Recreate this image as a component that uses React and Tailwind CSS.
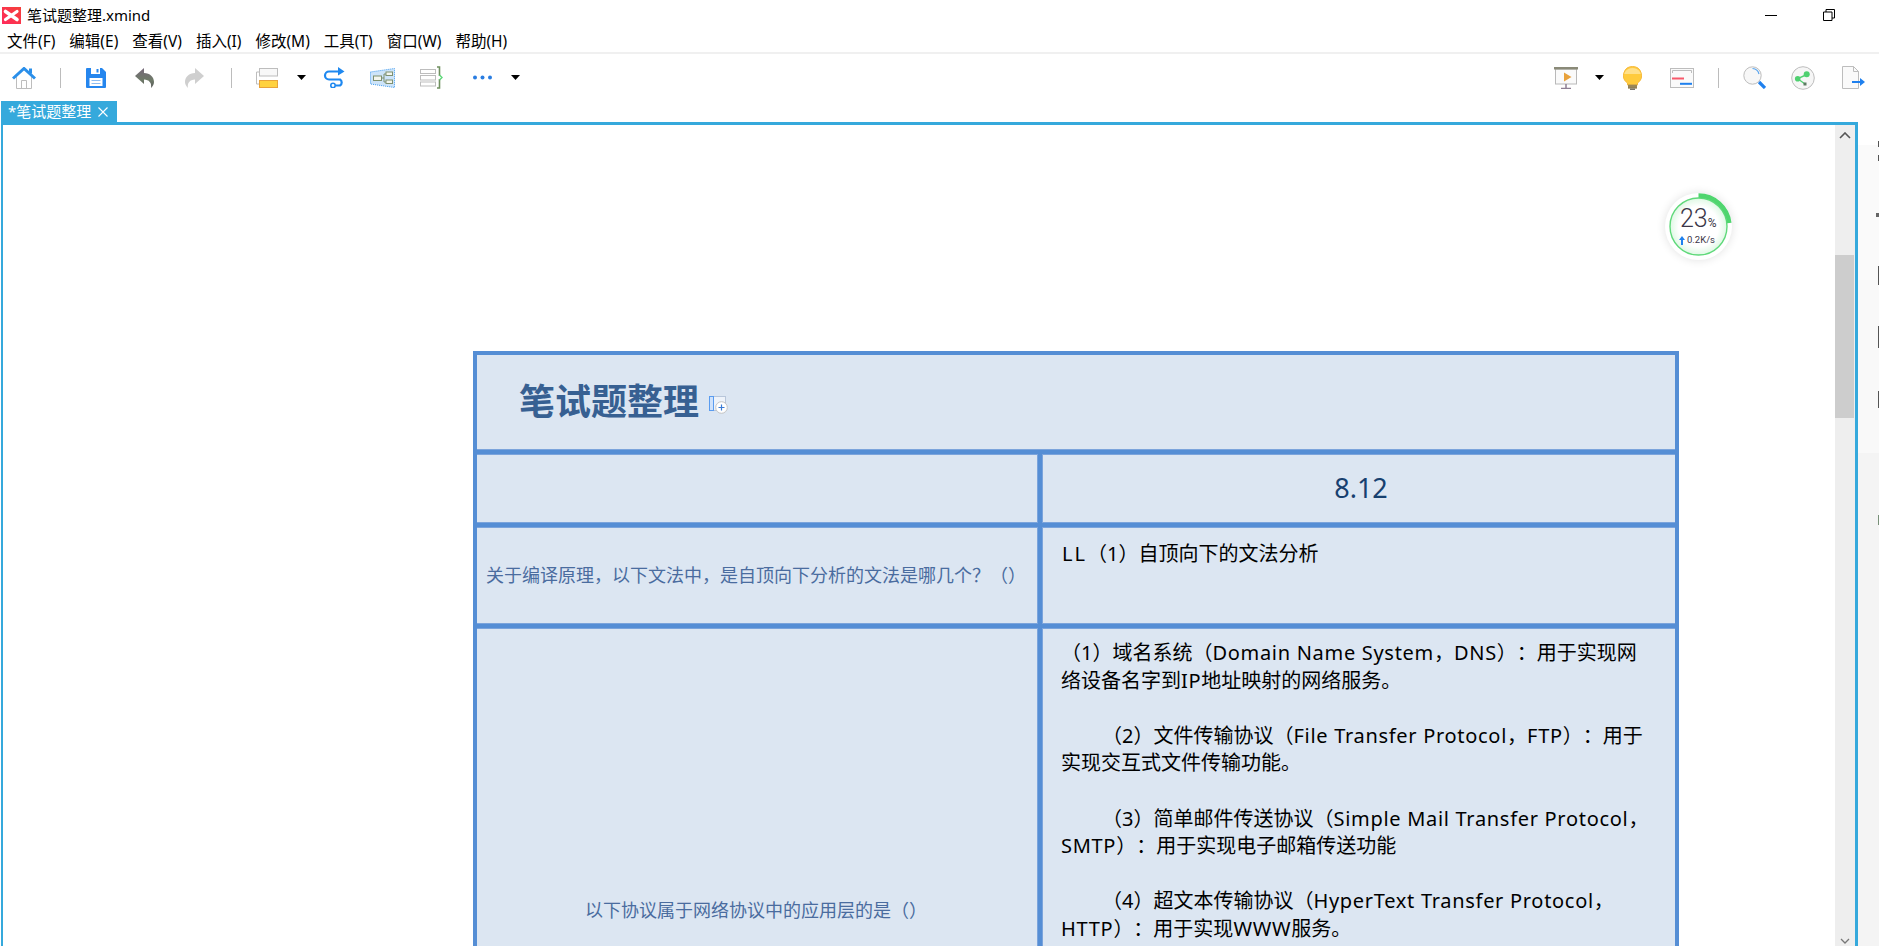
import React from "react";

const Caret = ({ className }) => (
  <svg width="9" height="5" viewBox="0 0 9 5" className={className}>
    <path d="M0 0H9L4.5 5Z" fill="#000" />
  </svg>
);

const Logo = () => (
  <svg width="19" height="17" viewBox="0 0 19 17">
    <defs>
      <linearGradient id="logoBg" x1="0" y1="1" x2="1" y2="0">
        <stop offset="0" stopColor="#ff2a5c" />
        <stop offset="1" stopColor="#f5403a" />
      </linearGradient>
    </defs>
    <rect width="19" height="17" fill="url(#logoBg)" />
    <path d="M3.5 4.5L15 12.5" stroke="#fff" strokeWidth="3.6" strokeLinecap="round" />
    <path d="M3.5 12.5L15 4.5" stroke="#fff" strokeWidth="3.2" strokeLinecap="round" />
  </svg>
);

const Home = ({ className }) => (
  <svg width="24" height="22" viewBox="0 0 24 22" className={className}>
    <path d="M4.5 10V21.5H19.5V10" fill="#fff" stroke="#bdbdbd" />
    <path d="M9.5 21.5V13.5H14.5V21.5" fill="none" stroke="#bdbdbd" />
    <path d="M1 11.5L12 1.5L23 11.5" fill="none" stroke="#2a8fea" strokeWidth="3" />
    <rect x="17" y="1.5" width="3" height="5" fill="#2a8fea" />
  </svg>
);

const Save = ({ className }) => (
  <svg width="20" height="20" viewBox="0 0 20 20" className={className}>
    <path d="M1 0H16L20 4V19A1 1 0 0 1 19 20H1A1 1 0 0 1 0 19V1A1 1 0 0 1 1 0Z" fill="#2586ee" />
    <rect x="5" y="0" width="9" height="6" fill="#fff" />
    <rect x="10.5" y="1" width="2" height="3.5" fill="#2586ee" />
    <rect x="3.5" y="10" width="13" height="8" fill="#fff" />
    <path d="M5.5 12.5H14.5M5.5 15.5H14.5" stroke="#8dbdf2" />
  </svg>
);

const Undo = ({ className, redo }) => (
  <svg width="19" height="20" viewBox="0 0 19 20" className={className}>
    <defs>
      <linearGradient id="undoFill" x1="0" y1="0" x2="0" y2="1">
        <stop offset="0" stopColor="#76687a" />
        <stop offset="0.6" stopColor="#6e7a68" />
        <stop offset="1" stopColor="#5a5a5a" />
      </linearGradient>
    </defs>
    <path
      d="M0 8L9 0V5C15 5 19 9 19 14C19 16 18 18 16 20C17 15 14 11.5 9 11.5V16Z"
      fill={redo ? "#cfcfcf" : "url(#undoFill)"}
      transform={redo ? "matrix(-1 0 0 1 19 0)" : undefined}
    />
  </svg>
);

const Topic = ({ className }) => (
  <svg width="22" height="20" viewBox="0 0 22 20" className={className}>
    <path d="M3.5 4H0.5V16H3.5" fill="none" stroke="#bdbdbd" />
    <rect x="3.5" y="0.5" width="18" height="7.5" fill="#f8f8f8" stroke="#bdbdbd" />
    <rect x="3.5" y="12.5" width="18" height="7" fill="#ffd23f" stroke="#e8a33a" />
  </svg>
);

const Relation = ({ className }) => (
  <svg width="22" height="21" viewBox="0 0 22 21" className={className}>
    <path d="M15 4.5H6A4 4 0 0 0 6 12.5H17A3.5 3.5 0 0 1 17 18.5H12.5" fill="none" stroke="#1e88f0" strokeWidth="2.2" />
    <path d="M15 0L21.5 4.5L15 8.5Z" fill="#1e88f0" />
    <circle cx="10" cy="18.5" r="2.2" fill="#fff" stroke="#1e88f0" strokeWidth="1.6" />
  </svg>
);

const Boundary = ({ className }) => (
  <svg width="25" height="20" viewBox="0 0 25 20" className={className}>
    <path d="M0.5 4L24.5 0.5V19.5L0.5 16Z" fill="#cde4f9" stroke="#3f9bf0" strokeDasharray="1 1" />
    <rect x="3.5" y="8" width="8" height="4.5" fill="#f3f6ee" stroke="#7f906f" />
    <rect x="16" y="4" width="6.5" height="3.5" fill="#f3f6ee" stroke="#7f906f" />
    <rect x="16" y="12" width="6.5" height="3.5" fill="#f3f6ee" stroke="#7f906f" />
    <path d="M11.5 10H14M14 6V14M14 6H16M14 14H16" fill="none" stroke="#7f906f" />
  </svg>
);

const Summary = ({ className }) => (
  <svg width="23" height="23" viewBox="0 0 23 23" className={className}>
    <rect x="0.5" y="3.5" width="15" height="4" fill="#fff" stroke="#bdbdbd" />
    <rect x="0.5" y="9.5" width="15" height="4.5" fill="#fff" stroke="#bdbdbd" />
    <rect x="0.5" y="16" width="15" height="4" fill="#fff" stroke="#bdbdbd" />
    <path d="M17 1H19.5V10M19.5 13V22H17" fill="none" stroke="#6f8f5f" strokeWidth="1.6" />
    <path d="M19.5 9L22 11.5L19.5 14" fill="none" stroke="#5fd97a" strokeWidth="1.4" />
  </svg>
);

const Dots = ({ className }) => (
  <svg width="19" height="5" viewBox="0 0 19 5" className={className}>
    <circle cx="2" cy="2.5" r="2" fill="#2a7de1" />
    <circle cx="9.5" cy="2.5" r="2" fill="#2a7de1" />
    <circle cx="17" cy="2.5" r="2" fill="#2a7de1" />
  </svg>
);

const Present = ({ className }) => (
  <svg width="24" height="22" viewBox="0 0 24 22" className={className}>
    <rect x="1.5" y="2" width="21" height="15" fill="#fafafa" stroke="#b9b9b9" />
    <rect x="0" y="0" width="24" height="2.5" fill="#8a8a78" />
    <path d="M10 5.5L17.5 10L10 14.5Z" fill="#e8a13a" />
    <path d="M12 17V21M7 21.5H17" stroke="#8e7f94" strokeWidth="1.5" />
  </svg>
);

const Bulb = ({ className }) => (
  <svg width="19" height="24" viewBox="0 0 19 24" className={className}>
    <path d="M9.5 0.5A9 9 0 0 1 14.5 17V19H4.5V17A9 9 0 0 1 9.5 0.5Z" fill="#ffcb3d" stroke="#f6b93b" />
    <path d="M2 6A9 9 0 0 1 17 6L17.8 8H1.2Z" fill="#ffe08a" />
    <rect x="5" y="18.5" width="9" height="4" fill="#b59a55" />
    <path d="M5 20H14M5 21.8H14" stroke="#7f7358" />
    <rect x="7" y="22.5" width="5" height="1.5" fill="#77746b" />
  </svg>
);

const Gantt = ({ className }) => (
  <svg width="24" height="20" viewBox="0 0 24 20" className={className}>
    <rect x="0.5" y="0.5" width="23" height="19" fill="#fafafa" stroke="#bdbdbd" />
    <path d="M2.5 5V2.5H21.5V5" fill="none" stroke="#bdbdbd" />
    <rect x="2" y="9.5" width="12" height="2" fill="#f7596b" />
    <rect x="10" y="14.8" width="12" height="2" fill="#1f80ee" />
  </svg>
);

const Search = ({ className }) => (
  <svg width="23" height="23" viewBox="0 0 23 23" className={className}>
    <circle cx="9.5" cy="9.5" r="8.7" fill="#f7f7f7" stroke="#bdbdbd" />
    <path d="M9.5 2.5A7 7 0 0 1 16 8" fill="none" stroke="#5aa5ef" strokeWidth="1.2" />
    <path d="M16 16L22 22" stroke="#1f80ee" strokeWidth="3.2" />
  </svg>
);

const Share = ({ className }) => (
  <svg width="24" height="24" viewBox="0 0 24 24" className={className}>
    <circle cx="12" cy="12" r="11.3" fill="#f6f6f6" stroke="#bdbdbd" />
    <path d="M16 8.5L6.7 12.7L14 18" fill="none" stroke="#4fd070" strokeWidth="1.4" />
    <circle cx="15.7" cy="8.3" r="3" fill="#4fd070" />
    <circle cx="6.7" cy="12.7" r="2.8" fill="#4fd070" />
    <rect x="12.5" y="16.5" width="3" height="3" fill="#5c7a62" />
  </svg>
);

const Exportfile = ({ className }) => (
  <svg width="23" height="23" viewBox="0 0 23 23" className={className}>
    <path d="M0.5 0.5H11.5L16.5 5.5V22.5H0.5Z" fill="#fafafa" stroke="#bdbdbd" />
    <path d="M11.5 0.5V5.5H16.5" fill="none" stroke="#bdbdbd" />
    <rect x="10" y="15" width="10" height="2" fill="#1f80ee" />
    <path d="M18 12L23 16L18 20Z" fill="#1f80ee" />
  </svg>
);

const Sep = ({ className }) => <div className={`w-px h-[20px] bg-[#bcbcbc] ${className}`} />;

const menus = [
  ["文件(F)", "ml-[7px]"],
  ["编辑(E)", "ml-[14px]"],
  ["查看(V)", "ml-[14px]"],
  ["插入(I)", "ml-[14px]"],
  ["修改(M)", "ml-[14px]"],
  ["工具(T)", "ml-[14px]"],
  ["窗口(W)", "ml-[14px]"],
  ["帮助(H)", "ml-[14px]"],
];

const Gauge = () => (
  <div className="absolute left-[1665px] top-[193px] w-[67px] h-[67px] rounded-full bg-white shadow-[0_0_10px_rgba(0,0,0,0.12)]">
    <svg width="67" height="67" viewBox="0 0 67 67" className="absolute left-0 top-0">
      <defs>
        <radialGradient id="gaugeFill">
          <stop offset="0.7" stopColor="#ffffff" />
          <stop offset="1" stopColor="#dff8e4" />
        </radialGradient>
      </defs>
      <circle cx="33.5" cy="33.5" r="28.5" fill="url(#gaugeFill)" stroke="#5fd97a" strokeWidth="1.4" />
      <path d="M33.5 2.5A31 31 0 0 1 64.3 30" fill="none" stroke="#4fd56e" strokeWidth="4.5" />
    </svg>
    <div className="absolute left-[15px] top-[12px] flex items-baseline text-[#3b3648] font-['Roboto',sans-serif] font-light">
      <span className="text-[25px] leading-[28px]">23</span>
      <span className="text-[12px] leading-[12px] font-normal">%</span>
    </div>
    <div className="absolute left-[14px] top-[41px] flex items-center gap-[2px] text-[9.5px] leading-[12px] text-[#3b3648] font-['Roboto',sans-serif]">
      <svg width="6" height="9" viewBox="0 0 6 9">
        <path d="M3 0L6 4H4V9H2V4H0Z" fill="#1f80ee" />
      </svg>
      <span>0.2K/s</span>
    </div>
  </div>
);

const Line = ({ indent, children }) => (
  <div className={`h-[27.6px] whitespace-nowrap ${indent ? "pl-[41px]" : ""}`}>{children}</div>
);

// latin runs are a little wider in the original font
const L = ({ children }) => <span className="tracking-[0.7px]">{children}</span>;

export default function App() {
  return (
    <div className="relative w-[1879px] h-[946px] overflow-hidden bg-white flex flex-col [text-spacing-trim:space-all] font-['Noto_Sans','Noto_Sans_CJK_SC',sans-serif]">
      {/* title bar */}
      <div className="h-[30px] flex items-center shrink-0">
        <div className="ml-[2px] mt-[1px]">
          <Logo />
        </div>
        <span className="ml-[6px] text-[15px] text-black">笔试题整理.xmind</span>
        <div className="ml-auto w-[12px] h-px bg-black mr-[46px]" />
        <svg width="12" height="12" viewBox="0 0 12 12" className="mr-[44px]">
          <path d="M0.5 3H9V11.5H0.5Z M3 3V0.5H11.5V9H9" fill="none" stroke="#000" />
        </svg>
      </div>

      {/* menu */}
      <div className="h-[22px] pt-[2px] flex items-center shrink-0 text-[15.5px] text-black">
        {menus.map(([label, cls]) => (
          <span key={label} className={cls}>
            {label}
          </span>
        ))}
      </div>
      <div className="h-[2px] bg-[#f0f0f0] shrink-0" />

      {/* toolbar */}
      <div className="h-[47px] flex items-center shrink-0">
        <Home className="ml-[12px]" />
        <Sep className="ml-[24px]" />
        <Save className="ml-[25px]" />
        <Undo className="ml-[29px]" />
        <Undo redo className="ml-[31px]" />
        <Sep className="ml-[27px]" />
        <Topic className="ml-[24px]" />
        <Caret className="ml-[19px]" />
        <Relation className="ml-[17px]" />
        <Boundary className="ml-[25px]" />
        <Summary className="ml-[25px]" />
        <Dots className="ml-[30px]" />
        <Caret className="ml-[19px]" />
        <Present className="ml-auto" />
        <Caret className="ml-[17px]" />
        <Bulb className="ml-[19px]" />
        <Gantt className="ml-[28px]" />
        <Sep className="ml-[24px]" />
        <Search className="ml-[24px]" />
        <Share className="ml-[25px]" />
        <Exportfile className="ml-[27px] mr-[14px]" />
      </div>

      {/* tab */}
      <div className="h-[21px] pl-px flex shrink-0">
        <div className="w-[116px] bg-[#35a9dc] flex items-center pl-[7px] text-[15px] leading-[21px] text-white">
          <span>*笔试题整理</span>
          <svg width="10" height="10" viewBox="0 0 10 10" className="ml-[7px]">
            <path d="M0.5 0.5L9.5 9.5M9.5 0.5L0.5 9.5" stroke="#fff" strokeWidth="1.1" />
          </svg>
        </div>
      </div>

      <div className="flex-1 flex min-h-0">
        {/* editor frame */}
        <div className="ml-px w-[1857px] border-x-2 border-r-[3px] border-t-[3px] border-[#35a9dc] flex min-h-0">
          <div className="flex-1 min-w-0 overflow-hidden">
            <div className="ml-[470px] mt-[226px] w-[1206px] border-4 border-[#558ed5] bg-[#558ed5] flex flex-col gap-[4px]">
              <div className="h-[95px] bg-[#dce6f2] border-b border-[#7ba4dc] flex items-center pl-[42px]">
                <span className="text-[36px] leading-[40px] font-bold text-[#376092]">笔试题整理</span>
                <svg width="19" height="18" viewBox="0 0 19 18" className="ml-[10px] mt-[5px]">
                  <rect x="0.5" y="0.5" width="16" height="14" fill="#eef3fa" stroke="#b8c6da" />
                  <rect x="0.5" y="0.5" width="4" height="14" fill="#cfe2fb" stroke="#5a9cf0" />
                  <circle cx="12.5" cy="11.5" r="5.8" fill="#fff" stroke="#c4c4c4" />
                  <path d="M9.5 11.5H15.5M12.5 8.5V14.5" stroke="#3a7bd5" strokeWidth="1.2" />
                </svg>
              </div>
              <div className="flex gap-[4px] h-[69px]">
                <div className="w-[561px] bg-[#dce6f2] border-y border-r border-[#7ba4dc]" />
                <div className="w-[633px] bg-[#dce6f2] border-y border-l border-[#7ba4dc] flex items-center justify-center text-[27px] text-[#17406f] pl-[4px]">
                  8.12
                </div>
              </div>
              <div className="flex gap-[4px] h-[97px]">
                <div className="w-[561px] bg-[#dce6f2] border-y border-r border-[#7ba4dc] flex items-center justify-center pr-[2px] text-[18px] text-[#4a6c9f]">
                  关于编译原理，以下文法中，是自顶向下分析的文法是哪几个？（）
                </div>
                <div className="w-[633px] bg-[#dce6f2] border-y border-l border-[#7ba4dc] pl-[19px] pt-[12px] text-[20px] leading-[27.6px] text-black">
                  <span className="tracking-[2px]">LL</span>（1）自顶向下的文法分析
                </div>
              </div>
              <div className="flex gap-[4px] h-[400px]">
                <div className="w-[561px] bg-[#dce6f2] border-t border-r border-[#7ba4dc] flex justify-center pt-[268px] pr-[2px] text-[18px] text-[#4a6c9f]">
                  以下协议属于网络协议中的应用层的是（）
                </div>
                <div className="w-[633px] bg-[#dce6f2] border-t border-l border-[#7ba4dc] pl-[18px] pt-[10px] text-[20px] leading-[27.6px] text-black">
                  <Line>（1）域名系统（<L>Domain Name System</L>，<L>DNS</L>）：用于实现网</Line>
                  <Line>络设备名字到<L>IP</L>地址映射的网络服务。</Line>
                  <Line />
                  <Line indent>（2）文件传输协议（<L>File Transfer Protocol</L>，<L>FTP</L>）：用于</Line>
                  <Line>实现交互式文件传输功能。</Line>
                  <Line />
                  <Line indent>（3）简单邮件传送协议（<L>Simple Mail Transfer Protocol</L>，</Line>
                  <Line><L>SMTP</L>）：用于实现电子邮箱传送功能</Line>
                  <Line />
                  <Line indent>（4）超文本传输协议（<L>HyperText Transfer Protocol</L>，</Line>
                  <Line><L>HTTP</L>）：用于实现<L>WWW</L>服务。</Line>
                </div>
              </div>
            </div>
          </div>
          {/* scrollbar */}
          <div className="w-[20px] bg-[#eeeeee] flex flex-col items-center shrink-0 relative">
            <svg width="12" height="7" viewBox="0 0 12 7" className="mt-[7px]">
              <path d="M1 6L6 1L11 6" fill="none" stroke="#555" strokeWidth="1.6" />
            </svg>
            <div className="w-[19px] mr-px h-[163px] mt-[116px] bg-[#cdcdcd]" />
            <svg width="10" height="6" viewBox="0 0 10 6" className="mt-auto mb-[2px]">
              <path d="M1 1L5 5L9 1" fill="none" stroke="#777" strokeWidth="1.3" />
            </svg>
          </div>
        </div>

        {/* cut-off side panel */}
        <div className="flex-1 flex flex-col items-end bg-[linear-gradient(#ffffff_23px,#fafafa_23px,#fafafa_158px,#f9f9f9_158px,#f9f9f9_331px,#f4f4f4_331px)]">
          <div className="w-[1px] h-[6px] mt-[19px] bg-[#555]" />
          <div className="w-[1px] h-[6px] mt-[8px] bg-[#555]" />
          <div className="w-[3px] h-[4px] mt-[52px] bg-[#666]" />
          <div className="w-[1px] h-[19px] mt-[49px] bg-[#555]" />
          <div className="w-[1px] h-[22px] mt-[41px] bg-[#555]" />
          <div className="w-[1px] h-[17px] mt-[43px] bg-[#555]" />
          <div className="w-[1px] h-[10px] mt-[107px] bg-[#789078]" />
        </div>
      </div>

      <Gauge />
    </div>
  );
}
